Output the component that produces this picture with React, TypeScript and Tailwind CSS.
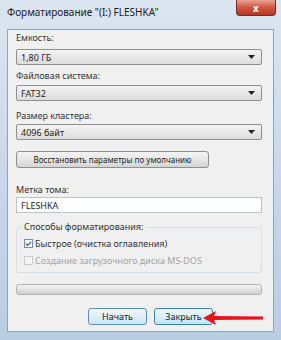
import { Check } from "lucide-react";

const font = { fontFamily: '"Noto Sans", "DejaVu Sans", sans-serif' };

function Combo({ value, className = "" }: { value: string; className?: string }) {
  return (
    <div
      className={`h-[16px] w-[246px] flex items-center justify-between rounded-[2px] border border-[#8e8f8f] bg-gradient-to-b from-[#f4f4f4] to-[#dcdcdc] pl-[4px] pr-[6px] ${className}`}
    >
      <span className="text-[9px] leading-none text-[#1e1e1e]">{value}</span>
      <svg width="7" height="4" viewBox="0 0 7 4">
        <path d="M0 0h7L3.5 4z" fill="#222" />
      </svg>
    </div>
  );
}

function Label({ children, className = "" }: { children: string; className?: string }) {
  return (
    <span className={`block h-[10px] text-[9px] leading-[10px] text-[#333] ${className}`}>
      {children}
    </span>
  );
}

function Btn({ label, focus }: { label: string; focus?: boolean }) {
  return (
    <div
      className={`h-[17px] w-[59px] flex items-center justify-center rounded-[3px] border bg-gradient-to-b ${
        focus
          ? "border-[#3c7fb1] from-[#eaf6fd] via-[#d9f0fc] to-[#bfe4f8]"
          : "border-[#5d8fb8] from-[#edf6fc] via-[#e0eff9] to-[#cde4f4]"
      }`}
    >
      <span className="text-[9px] leading-none text-[#222]">{label}</span>
    </div>
  );
}

export default function App() {
  return (
    <div
      style={font}
      className="relative w-[281px] h-[340px] overflow-hidden leading-none bg-gradient-to-b from-[#dce6f1] via-[#c9d8ea] to-[#b9cde3]"
    >
      <div className="h-[29px] flex items-center pl-[7px] pb-[6px]">
        <span className="text-[10px] leading-none text-[#1a1a1a]">
          Форматирование "(I:) FLESHKA"
        </span>
      </div>
      <div className="absolute top-0 right-[5px] h-[16px] w-[40px] rounded-b-[4px] border border-t-0 border-[#7a2a20] bg-gradient-to-b from-[#e8a093] via-[#d0553f] to-[#b93521] flex items-center justify-center">
        <span className="text-[10px] font-bold leading-none text-white">x</span>
      </div>

      <div className="mx-[7px] h-[303px] border border-[#8ea3bc] bg-[#f0f0f0] pl-[8px] pt-[3px] flex flex-col">
        <Label>Емкость:</Label>
        <Combo value="1,80 ГБ" className="mt-[6px]" />
        <Label className="mt-[6px]">Файловая система:</Label>
        <Combo value="FAT32" className="mt-[4px]" />
        <Label className="mt-[10px]">Размер кластера:</Label>
        <Combo value="4096 байт" className="mt-[3px]" />
        <div className="mt-[11px] h-[17px] w-[193px] flex items-center justify-center rounded-[3px] border border-[#8e8f8f] bg-gradient-to-b from-[#f3f3f3] via-[#e7e7e7] to-[#d4d4d4]">
          <span className="text-[8px] leading-none text-[#222]">Восстановить параметры по умолчанию</span>
        </div>
        <Label className="mt-[17px]">Метка тома:</Label>
        <div className="mt-[2px] h-[16px] w-[246px] flex items-center border border-[#bcc4cc] bg-white pl-[4px]">
          <span className="text-[9px] leading-none text-[#1e1e1e]">FLESHKA</span>
        </div>
        <div className="relative mt-[14px] h-[46px] w-[246px] shrink-0 rounded-[3px] border border-[#d5dfe5] pl-[7px] pt-[11px] flex flex-col gap-[8px]">
          <span className="absolute -top-[6px] left-[5px] bg-[#f0f0f0] px-[2px] text-[9px] leading-[10px] text-[#333]">
            Способы форматирования:
          </span>
          <div className="flex items-center gap-[2px]">
            <div className="h-[9px] w-[9px] flex items-center justify-center border border-[#7b8da6] bg-gradient-to-br from-[#eef1f5] to-[#ffffff]">
              <Check size={8} strokeWidth={4} className="text-[#3a5a9a]" />
            </div>
            <span className="text-[9px] leading-none text-[#333]">Быстрое (очистка оглавления)</span>
          </div>
          <div className="flex items-center gap-[2px]">
            <div className="h-[9px] w-[9px] border border-[#c8ccd0] bg-[#f4f4f4]" />
            <span className="text-[9px] leading-none text-[#a3a3a3]">Создание загрузочного диска MS-DOS</span>
          </div>
        </div>
        <div className="mt-[11px] h-[11px] w-[246px] shrink-0 rounded-[3px] border border-[#b2b2b2] bg-gradient-to-b from-[#f3f3f3] via-[#e2e2e2] to-[#cfcfcf]" />
        <div className="mt-[13px] flex gap-[7px] pl-[72px]">
          <Btn label="Начать" />
          <Btn label="Закрыть" focus />
        </div>
      </div>

      <svg className="absolute left-[203px] top-[311px]" width="62" height="14" viewBox="0 0 62 14">
        <path d="M0 7 L13 0 L11 5 L60 5.5 L60 8.5 L11 9 L13 14 Z" fill="#e8141c" />
      </svg>
    </div>
  );
}
